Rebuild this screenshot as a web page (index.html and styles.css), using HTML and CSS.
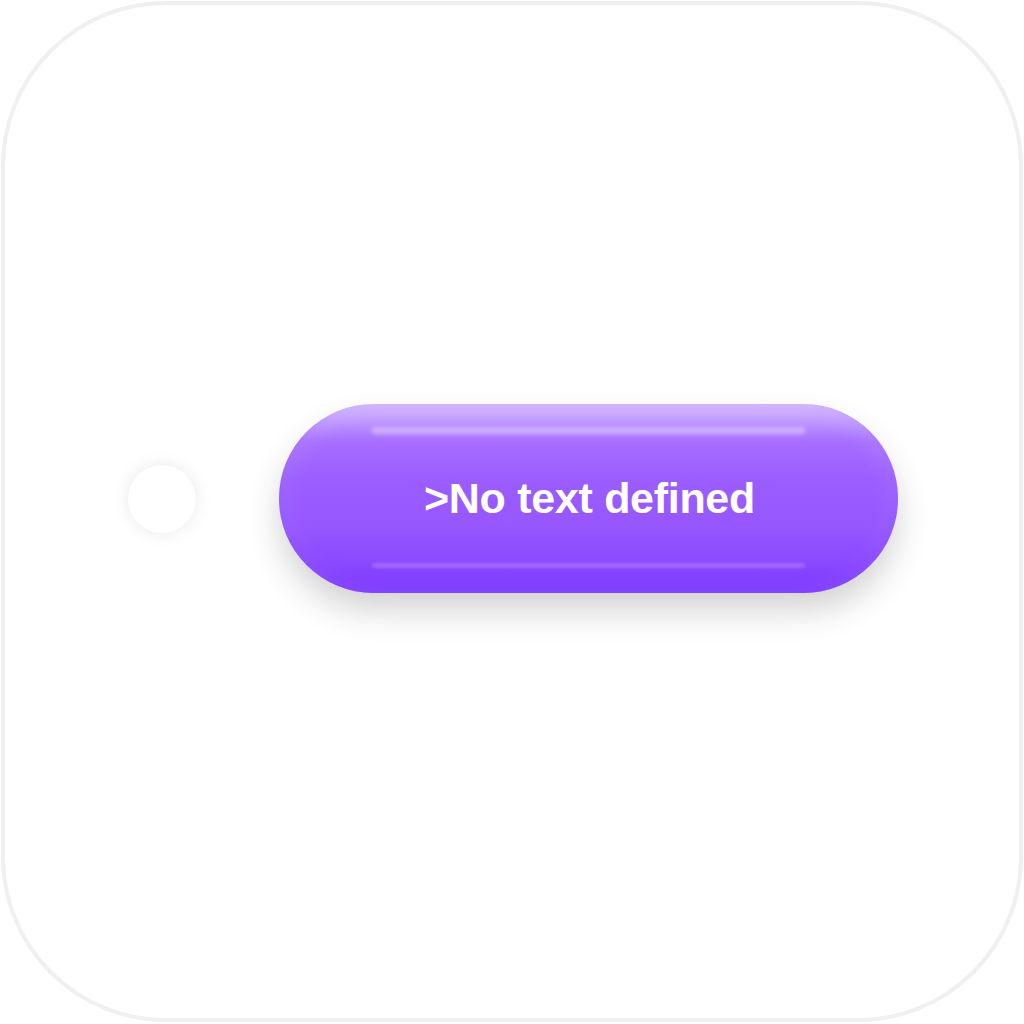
FILE: index.html
```html
<!DOCTYPE html>
<html>
<head>
<meta charset="utf-8">
<link rel="stylesheet" href="styles.css">
</head>
<body>
<div class="card">
  <div class="row">
    <div class="dot"></div>
    <button class="btn"><span class="label">&gt;No text defined</span></button>
  </div>
</div>
</body>
</html>
```
FILE: styles.css
```css
html, body {
  margin: 0;
  padding: 0;
  background: #ffffff;
}
.card {
  box-sizing: border-box;
  width: 1022px;
  height: 1021px;
  margin: 1px 0 0 1px;
  border: 4px solid #f0f0f0;
  border-radius: 165px;
  background: #ffffff;
  display: flex;
  align-items: center;
  padding: 0 0 26px 123px;
}
.row {
  display: flex;
  align-items: center;
  gap: 83px;
}
.dot {
  width: 68px;
  height: 68px;
  border-radius: 50%;
  background: #ffffff;
  box-shadow: 0 0 18px rgba(0, 0, 0, 0.09);
}
.btn {
  position: relative;
  width: 619px;
  height: 189px;
  border: none;
  border-radius: 95px;
  padding: 0;
  background: linear-gradient(180deg, #d0b5fd 0%, #c5a3fe 6%, #a66eff 20%, #9b5dff 40%, #9657ff 65%, #8d4aff 82%, #7b36ff 100%);
  box-shadow: 0 18px 32px rgba(40, 40, 40, 0.2), inset 0 0 26px rgba(255, 255, 255, 0.22), inset 0 -8px 14px rgba(110, 40, 255, 0.5);
  display: flex;
  align-items: center;
  justify-content: center;
  font-family: "Liberation Sans", Arial, sans-serif;
  font-weight: bold;
  font-size: 43px;
  color: #ffffff;
}
.btn::before {
  content: "";
  position: absolute;
  left: 93px;
  right: 93px;
  top: 23px;
  height: 7px;
  border-radius: 3px;
  background: rgba(235, 220, 255, 0.5);
  filter: blur(2px);
}
.btn::after {
  content: "";
  position: absolute;
  left: 93px;
  right: 93px;
  bottom: 25px;
  height: 5px;
  border-radius: 3px;
  background: rgba(200, 170, 255, 0.35);
  filter: blur(1.5px);
}
.label {
  position: relative;
  top: 0px;
  left: 1px;
  letter-spacing: -0.3px;
}
```
